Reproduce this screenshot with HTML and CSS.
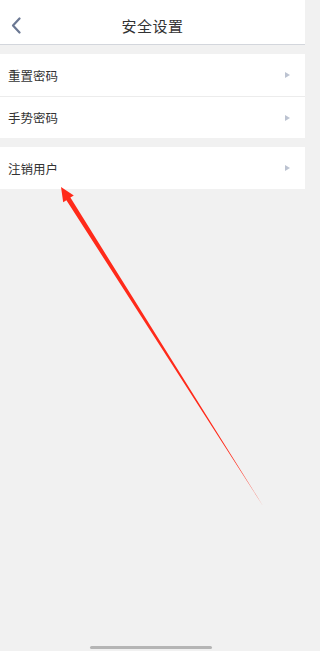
FILE: index.html
```html
<!DOCTYPE html>
<html lang="zh">
<head>
<meta charset="utf-8">
<link rel="stylesheet" href="styles.css">
</head>
<body>
<div class="page">
  <header class="nav">
    <svg class="back" width="12" height="17" viewBox="0 0 12 17"><path d="M9.5 1.5 L3 8.5 L9.5 15.5" fill="none" stroke="#6b7893" stroke-width="2.2" stroke-linecap="round" stroke-linejoin="round"/></svg>
    <h1 class="title">安全设置</h1>
  </header>
  <section class="group">
    <div class="row"><span>重置密码</span><i class="tri"></i></div>
    <div class="row"><span>手势密码</span><i class="tri"></i></div>
  </section>
  <section class="group">
    <div class="row"><span>注销用户</span><i class="tri"></i></div>
  </section>
  <div class="home"></div>
  <svg class="arrow" width="305" height="651" viewBox="0 0 305 651">
    <polygon points="61,187 73.8,195.4 70.4,197.6 263,506 66.4,200.2 63.2,202.2" fill="#ff2a1a"/>
  </svg>
</div>
</body>
</html>
```
FILE: styles.css
```css
* { box-sizing: border-box; margin: 0; padding: 0; }
html, body { height: 651px; overflow: hidden; }
body { background: #f1f1f1; font-family: "Noto Sans CJK SC", "Noto Sans", sans-serif; color: #333; }
.page { position: relative; width: 305px; height: 651px; display: flex; flex-direction: column; }
.nav { height: 45px; padding-top: 6px; background: #fff; border-bottom: 1px solid #d3d6dc; display: flex; align-items: center; justify-content: center; position: relative; }
.back { position: absolute; left: 10px; top: 17px; }
.title { font-size: 15px; font-weight: 400; color: #333; letter-spacing: 0.5px; }
.group { background: #fff; margin-top: 9px; }
.row { height: 42px; display: flex; align-items: center; justify-content: space-between; padding: 0 15px 0 8px; font-size: 12.5px; color: #333; }
.row + .row { border-top: 1px solid #ececec; }
.tri { width: 0; height: 0; border-left: 5px solid #bcc3d1; border-top: 3.5px solid transparent; border-bottom: 3.5px solid transparent; }
.home { position: absolute; left: 90px; top: 646px; width: 122px; height: 3px; border-radius: 2px; background: #b5b5b5; }
.arrow { position: absolute; left: 0; top: 0; }
```
